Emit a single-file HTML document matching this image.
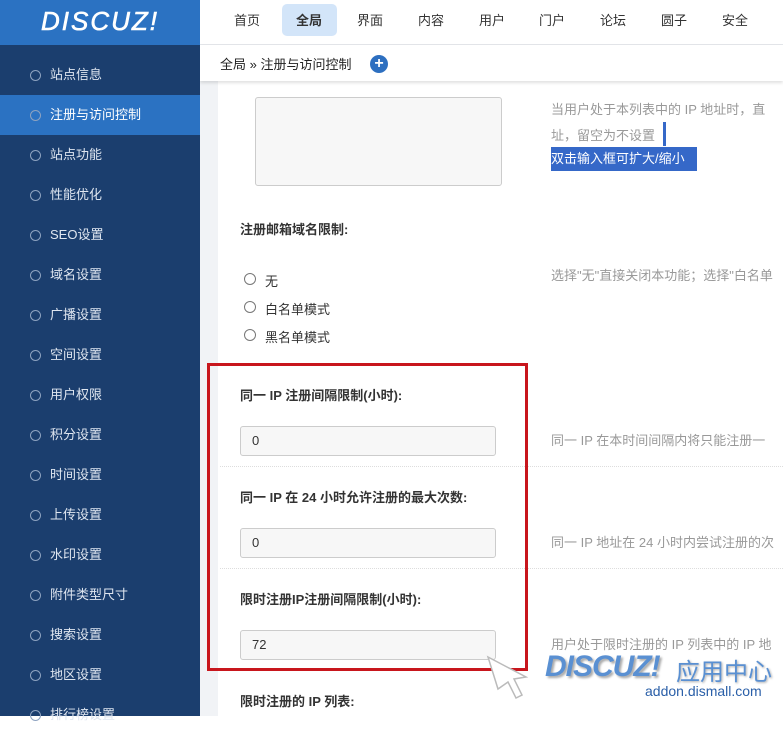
<!DOCTYPE html>
<html><head><meta charset="utf-8"><style>
*{margin:0;padding:0;box-sizing:border-box}
body{width:783px;height:716px;overflow:hidden;position:relative;font-family:"Liberation Sans","Microsoft YaHei","Noto Sans CJK SC",sans-serif;font-size:13px;color:#333;background:#fff}
.a{position:absolute;white-space:nowrap}
#side{left:0;top:0;width:200px;height:716px;background:#1b3e6e}
#logo{left:0;top:0;width:200px;height:45px;background:#2b72c2;color:#fff;font:italic 26px "Liberation Sans",sans-serif;text-align:center;line-height:42px;letter-spacing:2px;-webkit-text-stroke:0.6px #fff}
.it{left:0;width:200px;height:40px;color:#dfe6f0;font-size:13px;line-height:40px;padding-left:50px}
.it:before{content:"";position:absolute;left:30px;top:15px;width:9px;height:9px;border:1px solid #8ea3c0;border-radius:50%}
.it.on{background:#2b72c2;color:#fff}
.nav{top:1px;height:40px;line-height:40px;font-size:13px;color:#333}
.desc{color:#999;font-size:13px}
.lbl{font-weight:bold;font-size:13px;color:#333}
.inp{left:240px;width:256px;height:30px;border:1px solid #ccc;border-radius:3px;background:#f7f7f7;padding-left:11px;line-height:28px;font-size:13px;color:#333}
.rad{width:12px;height:12px;border:1px solid #777;border-radius:50%;left:244px}
.dot{left:220px;width:563px;border-top:1px dotted #ddd}
</style></head><body>
<div class="a" style="left:200px;top:0;width:583px;height:716px;background:#f1f3f6"></div>
<div class="a" style="left:218px;top:80px;width:565px;height:636px;background:#fff"></div>
<div class="a" style="left:200px;top:0;width:583px;height:45px;background:#fff;border-bottom:1px solid #e3e6ea"></div>
<div class="a" style="left:282px;top:4px;width:55px;height:32px;background:#d3e5f9;border-radius:5px"></div>
<div class="a nav" style="left:234px">首页</div>
<div class="a nav" style="left:296px;font-weight:bold">全局</div>
<div class="a nav" style="left:357px">界面</div>
<div class="a nav" style="left:418px">内容</div>
<div class="a nav" style="left:479px">用户</div>
<div class="a nav" style="left:539px">门户</div>
<div class="a nav" style="left:600px">论坛</div>
<div class="a nav" style="left:661px">圆子</div>
<div class="a nav" style="left:722px">安全</div>
<div class="a" style="left:200px;top:45px;width:583px;height:36px;background:#fff;box-shadow:0 2px 3px rgba(0,0,0,.12)"></div>
<div class="a" style="left:220px;top:54px;font-size:13px;color:#222">全局 » 注册与访问控制</div>
<div class="a" style="left:370px;top:55px;width:18px;height:18px;border-radius:50%;background:#2d6fc0;color:#fff;font:bold 16px/17px 'Liberation Sans';text-align:center">+</div>

<div id="side" class="a"></div>
<div id="logo" class="a">DISCUZ!</div>
<div class="a it" style="top:55px">站点信息</div>
<div class="a it on" style="top:95px">注册与访问控制</div>
<div class="a it" style="top:135px">站点功能</div>
<div class="a it" style="top:175px">性能优化</div>
<div class="a it" style="top:215px">SEO设置</div>
<div class="a it" style="top:255px">域名设置</div>
<div class="a it" style="top:295px">广播设置</div>
<div class="a it" style="top:335px">空间设置</div>
<div class="a it" style="top:375px">用户权限</div>
<div class="a it" style="top:415px">积分设置</div>
<div class="a it" style="top:455px">时间设置</div>
<div class="a it" style="top:495px">上传设置</div>
<div class="a it" style="top:535px">水印设置</div>
<div class="a it" style="top:575px">附件类型尺寸</div>
<div class="a it" style="top:615px">搜索设置</div>
<div class="a it" style="top:655px">地区设置</div>
<div class="a it" style="top:695px">排行榜设置</div>

<div class="a" style="left:255px;top:97px;width:247px;height:89px;border:1px solid #ccc;border-radius:3px;background:#f7f7f7"></div>
<div class="a desc" style="left:551px;top:99px">当用户处于本列表中的 IP 地址时，直</div>
<div class="a desc" style="left:551px;top:125px">址，留空为不设置</div>
<div class="a" style="left:663px;top:122px;width:3px;height:24px;background:#3568c8"></div>
<div class="a" style="left:551px;top:147px;width:146px;height:24px;background:#3568c8;color:#fff;line-height:24px;font-size:13px">双击输入框可扩大/缩小</div>

<div class="a lbl" style="left:240px;top:219px">注册邮箱域名限制:</div>
<div class="a rad" style="top:273px"></div><div class="a" style="left:265px;top:271px">无</div>
<div class="a rad" style="top:301px"></div><div class="a" style="left:265px;top:299px">白名单模式</div>
<div class="a rad" style="top:329px"></div><div class="a" style="left:265px;top:327px">黑名单模式</div>
<div class="a desc" style="left:551px;top:265px">选择"无"直接关闭本功能；选择"白名单</div>

<div class="a lbl" style="left:240px;top:385px">同一 IP 注册间隔限制(小时):</div>
<div class="a inp" style="top:426px">0</div>
<div class="a desc" style="left:551px;top:430px">同一 IP 在本时间间隔内将只能注册一</div>
<div class="a dot" style="top:466px"></div>
<div class="a lbl" style="left:240px;top:487px">同一 IP 在 24 小时允许注册的最大次数:</div>
<div class="a inp" style="top:528px">0</div>
<div class="a desc" style="left:551px;top:532px">同一 IP 地址在 24 小时内尝试注册的次</div>
<div class="a dot" style="top:568px"></div>
<div class="a lbl" style="left:240px;top:589px">限时注册IP注册间隔限制(小时):</div>
<div class="a inp" style="top:630px">72</div>
<div class="a desc" style="left:551px;top:634px">用户处于限时注册的 IP 列表中的 IP 地</div>
<div class="a lbl" style="left:240px;top:691px">限时注册的 IP 列表:</div>

<div class="a" style="left:207px;top:363px;width:321px;height:308px;border:3px solid #c8161d"></div>

<svg class="a" style="left:486px;top:655px" width="50" height="45" viewBox="0 0 50 45"><path d="M2 2 L40 22 L28 24 L36 40 L30 43 L22 27 L12 34 Z" fill="#fff" stroke="#bbb" stroke-width="1.5"/></svg>
<div class="a" style="left:545px;top:650px;font:italic bold 30px/34px 'Liberation Sans',sans-serif;color:#5a90d2;text-shadow:2px 2px 2px #aaa;letter-spacing:-1px">DISCUZ!</div>
<div class="a" style="left:676px;top:652px;font-size:24px;color:#5a90d2;text-shadow:1px 1px 2px #aaa">应用中心</div>
<div class="a" style="left:645px;top:683px;font-size:14px;color:#2a5fa8">addon.dismall.com</div>
</body></html>
